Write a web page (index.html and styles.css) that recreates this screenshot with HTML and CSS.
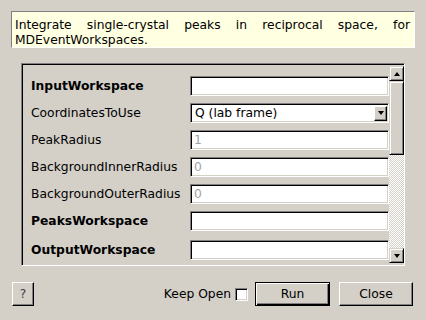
FILE: index.html
```html
<!DOCTYPE html>
<html lang="en">
<head>
  <meta charset="UTF-8">
  <title>IntegratePeaksMD</title>
  <link rel="stylesheet" href="styles.css">
</head>
<body>
  <div class="dialog">
    <!-- Algorithm summary -->
    <div class="summary">Integrate single-crystal peaks in reciprocal space, for MDEventWorkspaces.</div>

    <!-- Property list -->
    <div class="scroll-frame">
      <div class="props">
        <label class="req">InputWorkspace</label>
        <div class="field"></div>

        <label>CoordinatesToUse</label>
        <div class="field combo">
          <span class="combo-text">Q (lab frame)</span>
          <span class="combo-btn"><span class="tri-down"></span></span>
        </div>

        <label>PeakRadius</label>
        <div class="field hint">1</div>

        <label>BackgroundInnerRadius</label>
        <div class="field hint">0</div>

        <label>BackgroundOuterRadius</label>
        <div class="field hint">0</div>

        <label class="req">PeaksWorkspace</label>
        <div class="field"></div>

        <label class="req last">OutputWorkspace</label>
        <div class="field last"></div>
      </div>

      <div class="scrollbar">
        <div class="sb-btn"><span class="tri-up"></span></div>
        <div class="sb-thumb"></div>
        <div class="sb-track"></div>
        <div class="sb-btn"><span class="tri-down"></span></div>
      </div>
    </div>

    <!-- Buttons -->
    <div class="button-row">
      <button class="btn help">?</button>
      <div class="spacer"></div>
      <span class="keep-open">Keep Open</span>
      <span class="checkbox"></span>
      <button class="btn run">Run</button>
      <button class="btn close">Close</button>
    </div>
  </div>
</body>
</html>
```

FILE: styles.css
```css
/* General */
body {
  margin: 0;
  background-color: #d4d0c8;
  font-family: "DejaVu Sans", sans-serif;
  font-size: 12.3px;
  color: #000;
}

.dialog {
  padding: 11px;
  display: flex;
  flex-direction: column;
}

/* Summary box */
.summary {
  height: 29px;
  padding: 6px 4px 0 3px;
  border: 1px solid;
  border-color: #808080 #fff #fff #808080;
  background-color: #ffffe1;
  text-align: justify;
  line-height: 15px;
}

/* Scroll frame */
.scroll-frame {
  margin: 15px 10px 0 10px;
  height: 200px;
  display: flex;
  border: 1px solid;
  border-color: #808080 #fff #fff #808080;
  box-shadow: inset 1px 1px #000;
  padding: 1px 0 0 1px;
}

.props {
  flex: 1;
  display: grid;
  grid-template-columns: 159px 1fr;
  grid-template-rows: repeat(6, 20px) 22px;
  row-gap: 7px;
  padding: 11px 0 0 8px;
  align-items: center;
  overflow: hidden;
}

.props label {
  white-space: nowrap;
  height: 20px;
  line-height: 20px;
}

.props .req {
  font-weight: bold;
}

.props .last {
  align-self: end;
}

.field {
  height: 20px;
  box-sizing: border-box;
  background-color: #fff;
  border: 1px solid;
  border-color: #808080 #fff #fff #808080;
  box-shadow: inset 1px 1px #000, inset -1px -1px #d4d0c8;
  padding: 0 3px;
  line-height: 18px;
}

.field.hint {
  color: #a0a0a0;
}

.combo {
  display: flex;
  align-items: center;
  padding-right: 1px;
}

.combo-text {
  flex: 1;
  padding-left: 1px;
}

.combo-btn {
  width: 13px;
  height: 15px;
  box-sizing: border-box;
  background-color: #d4d0c8;
  border: 1px solid;
  border-color: #fff #000 #000 #fff;
  box-shadow: inset -1px -1px #808080;
  display: flex;
  align-items: center;
  justify-content: center;
}

/* Triangles */
.tri-down,
.tri-up {
  width: 0;
  height: 0;
  border-left: 3.5px solid transparent;
  border-right: 3.5px solid transparent;
}

.tri-down {
  border-top: 4px solid #000;
}

.tri-up {
  border-bottom: 4px solid #000;
}

/* Scrollbar */
.scrollbar {
  width: 15px;
  display: flex;
  flex-direction: column;
  padding: 1px 0 2px 0;
}

.sb-btn,
.sb-thumb {
  box-sizing: border-box;
  background-color: #d4d0c8;
  border: 1px solid;
  border-color: #d4d0c8 #000 #000 #d4d0c8;
  box-shadow: inset 1px 1px #fff, inset -1px -1px #808080;
}

.sb-btn {
  height: 15px;
  display: flex;
  align-items: center;
  justify-content: center;
}

.sb-thumb {
  height: 74px;
}

.sb-track {
  flex: 1;
  background: repeating-conic-gradient(#d4d0c8 0 25%, #fff 0 50%) 0 0 / 2px 2px;
}

/* Bottom buttons */
.button-row {
  margin-top: 16px;
  display: flex;
  align-items: center;
  padding: 0 2px 0 1px;
}

.spacer {
  flex: 1;
}

.btn {
  height: 24px;
  box-sizing: border-box;
  background-color: #d4d0c8;
  border: 1px solid;
  border-color: #fff #000 #000 #fff;
  box-shadow: inset -1px -1px #808080;
  font-family: "DejaVu Sans", sans-serif;
  font-size: 12.3px;
  color: #000;
  padding: 0;
}

.help {
  width: 22px;
  color: #404040;
}

.run {
  width: 75px;
  border-color: #000;
  box-shadow: inset 1px 1px #fff, inset -1px -1px #000, inset -2px -2px #808080;
}

.close {
  width: 74px;
  margin-left: 9px;
}

.keep-open {
  margin-right: 4px;
}

.checkbox {
  width: 13px;
  height: 13px;
  box-sizing: border-box;
  background-color: #fff;
  border: 1px solid;
  border-color: #808080 #fff #fff #808080;
  box-shadow: inset 1px 1px #000, inset -1px -1px #d4d0c8;
  margin-right: 7px;
}
```
